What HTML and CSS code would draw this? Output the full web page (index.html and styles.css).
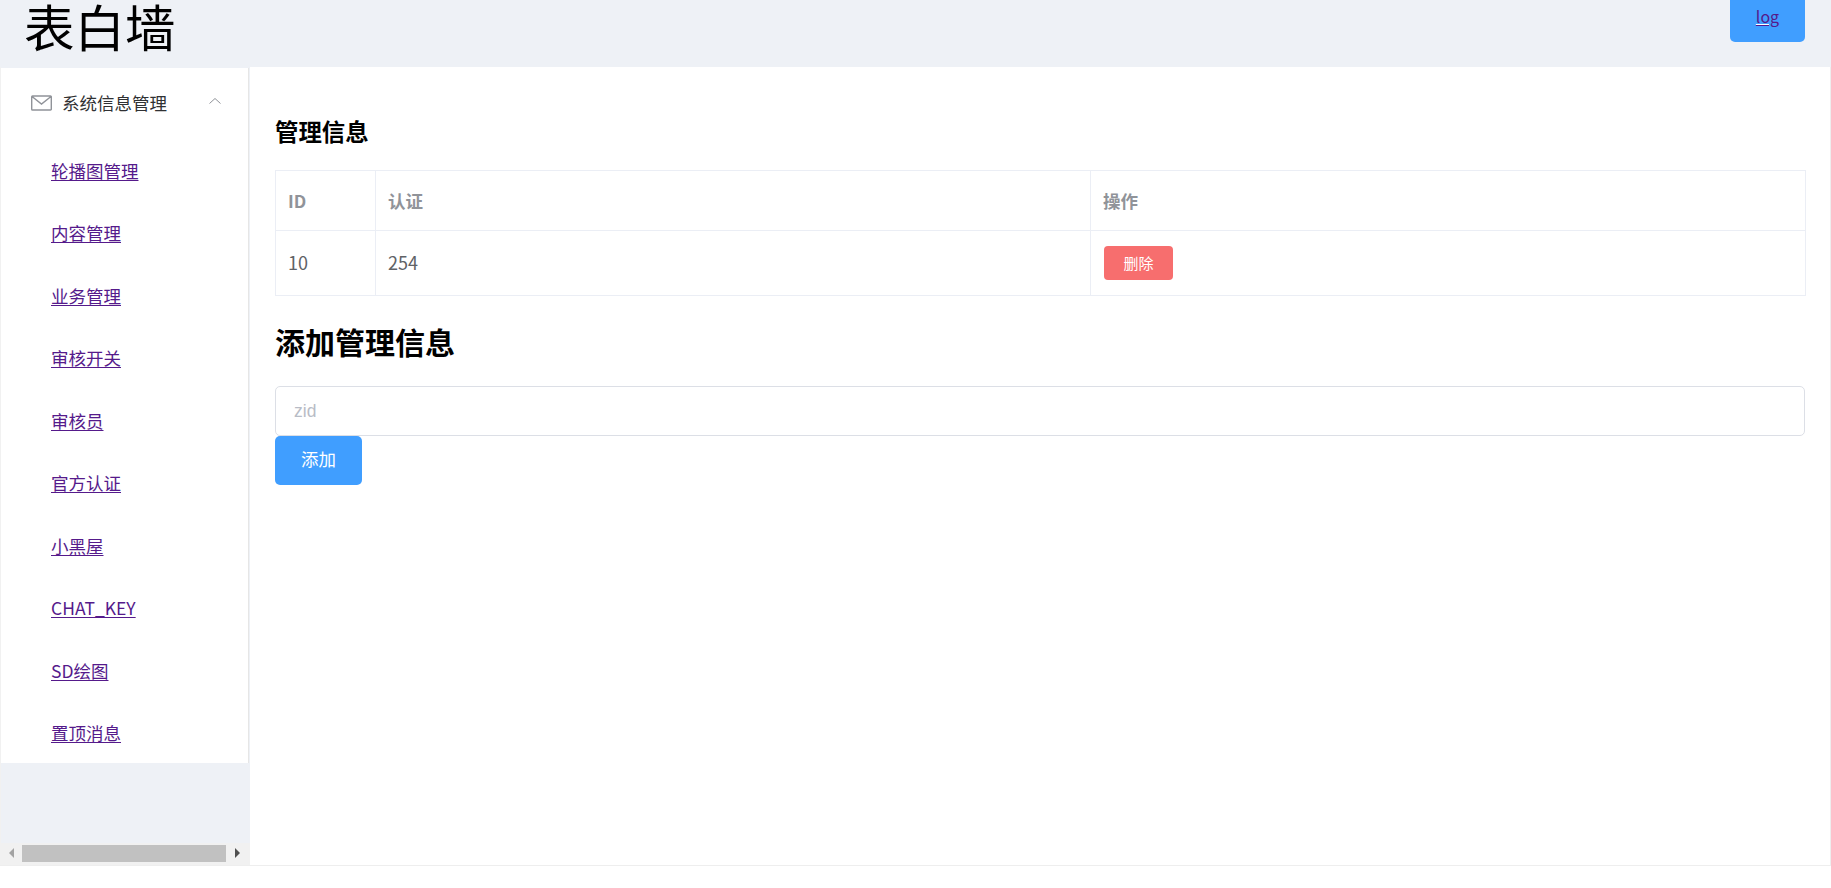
FILE: index.html
```html
<!DOCTYPE html>
<html lang="zh">
<head>
<meta charset="utf-8">
<title>表白墙</title>
<link rel="stylesheet" href="styles.css">
</head>
<body>
<div class="app">
  <header class="topbar">
    <h1 class="brand">表白墙</h1>
    <a class="btn log-btn" href="#"><span class="visited">log</span></a>
  </header>
  <div class="body-row">
    <aside class="aside">
      <nav class="menu">
        <div class="menu-title">
          <svg class="mail" viewBox="0 0 21 16" width="21" height="16"><path d="M1.500 1h18a.8.8 0 0 1 .8.8v12.400a.8.8 0 0 1-.8.8h-18a.8.8 0 0 1-.8-.8v-12.400a.8.8 0 0 1 .8-.8zM1 1.500l9.500 7.500 9.500-7.500" fill="none" stroke="#909399" stroke-width="1.400"/></svg>
          <span class="menu-label">系统信息管理</span>
          <svg class="chev" viewBox="0 0 12 6" width="12" height="6"><path d="M.5 5.500L6 .5l5.500 5" fill="none" stroke="#909399" stroke-width="1"/></svg>
        </div>
        <div class="menu-item"><a class="visited" href="#">轮播图管理</a></div>
        <div class="menu-item"><a class="visited" href="#">内容管理</a></div>
        <div class="menu-item"><a class="visited" href="#">业务管理</a></div>
        <div class="menu-item"><a class="visited" href="#">审核开关</a></div>
        <div class="menu-item"><a class="visited" href="#">审核员</a></div>
        <div class="menu-item"><a class="visited" href="#">官方认证</a></div>
        <div class="menu-item"><a class="visited" href="#">小黑屋</a></div>
        <div class="menu-item"><a class="visited" href="#">CHAT_KEY</a></div>
        <div class="menu-item"><a class="visited" href="#">SD绘图</a></div>
        <div class="menu-item"><a class="visited" href="#">置顶消息</a></div>
      </nav>
      <div class="scrollbar">
        <span class="arrow arrow-left"></span>
        <span class="thumb"></span>
        <span class="arrow arrow-right"></span>
      </div>
    </aside>
    <main class="main">
      <h3 class="title-sm">管理信息</h3>
      <table class="table">
        <colgroup><col class="col-id"><col class="col-auth"><col class="col-op"></colgroup>
        <thead>
          <tr><th>ID</th><th>认证</th><th>操作</th></tr>
        </thead>
        <tbody>
          <tr><td class="cell-text">10</td><td class="cell-text">254</td><td><button class="btn-del" type="button">删除</button></td></tr>
        </tbody>
      </table>
      <h2 class="title-lg">添加管理信息</h2>
      <input class="input" type="text" placeholder="zid">
      <button class="btn add-btn" type="button">添加</button>
    </main>
  </div>
</div>
</body>
</html>
```
FILE: styles.css
```css
* { box-sizing: border-box; }
html, body { margin: 0; padding: 0; background: #fff; }
body {
  font-family: "Noto Sans CJK SC", "Open Sans", sans-serif;
  font-size: 17.5px;
  overflow: hidden;
  height: 888px;
}
.app {
  height: 866px;
  display: flex;
  flex-direction: column;
  border-bottom: 1px solid #eee;
  overflow: hidden;
}
.topbar {
  height: 67px;
  flex: none;
  background: #eef1f6;
  display: flex;
  justify-content: space-between;
  align-items: flex-start;
  padding: 0 26px 0 24px;
}
.brand {
  margin: 0;
  font-size: 50.5px;
  font-weight: 400;
  line-height: 50px;
  color: #000;
}
.btn {
  display: inline-block;
  background: #409eff;
  color: #fff;
  border: 0;
  border-radius: 5px;
  font-family: inherit;
  font-size: 17.5px;
  line-height: 20px;
}
.log-btn {
  margin-top: -8px;
  width: 75px;
  height: 50px;
  padding: 14px 0;
  text-align: center;
  font-size: 16px;
}
.visited { color: #551a8b; text-decoration: underline; text-underline-offset: 2px; }
.body-row { flex: 1; display: flex; min-height: 0; }
.aside {
  width: 250px;
  flex: none;
  background: #eef1f6;
  display: flex;
  flex-direction: column;
  padding-top: 1px;
  border-left: 1px solid #f1f1f1;
}
.menu {
  height: 695px;
  width: 248px;
  background: #fff;
  border-right: 1px solid #e6e6e6;
  flex: none;
}
.menu-title {
  height: 70px;
  display: flex;
  align-items: center;
  padding: 0 0 2px 30px;
  color: #303133;
}
.mail { flex: none; margin-top: 2px; }
.menu-label { margin-left: 10px; width: 147px; white-space: nowrap; }
.chev { flex: none; margin-top: -2px; }
.menu-item {
  height: 62.5px;
  padding: 2px 0 0 50px;
  display: flex;
  align-items: center;
}
.scrollbar {
  margin-top: auto;
  height: 22px;
  background: #f1f1f1;
  display: flex;
  align-items: flex-start;
  padding: 2px 0 0 8px;
}
.thumb { width: 204px; height: 17px; background: #c1c1c1; margin: 0 9px 0 8px; flex: none; }
.arrow {
  width: 0;
  height: 0;
  margin-top: 3px;
  border-top: 5px solid transparent;
  border-bottom: 5px solid transparent;
  flex: none;
}
.arrow-left { border-right: 5px solid #a3a3a3; }
.arrow-right { border-left: 5px solid #505050; }
.main {
  flex: 1;
  min-width: 0;
  background: #fff;
  padding: 0 25px 0 25px;
  border-right: 1px solid #eee;
}
.title-sm {
  margin: 48px 0 22px;
  font-size: 23.4px;
  font-weight: 700;
  line-height: 33px;
  color: #000;
}
.table {
  width: 1530px;
  border-collapse: collapse;
  table-layout: fixed;
  border: 1px solid #ebeef5;
}
.col-id { width: 100px; }
.col-auth { width: 715px; }
.col-op { width: 715px; }
.table th, .table td {
  border: 1px solid #ebeef5;
  padding: 0 13px;
  text-align: left;
}
.table th { height: 60px; color: #909399; font-weight: 700; padding-left: 12px; }
.table td { height: 65px; color: #606266; }
.table .cell-text { padding: 0 12px 3px; font-size: 18px; }
.btn-del {
  display: block;
  width: 69px;
  height: 34px;
  padding: 0 0 2px;
  border: 0;
  border-radius: 4px;
  background: #f76e6e;
  color: #fff;
  font-family: inherit;
  font-size: 15px;
}
.title-lg {
  margin: 25px 0 25px;
  font-size: 30px;
  font-weight: 700;
  line-height: 40px;
  color: #000;
}
.input {
  display: block;
  width: 100%;
  height: 50px;
  padding: 0 18px;
  border: 1px solid #dcdfe6;
  border-radius: 5px;
  font-family: "Liberation Sans", sans-serif;
  font-size: 17.5px;
  outline: none;
}
.input::placeholder { color: #b8bcc6; opacity: 1; }
.add-btn { display: block; width: 87px; height: 49px; padding: 0 0 4px; }
```
